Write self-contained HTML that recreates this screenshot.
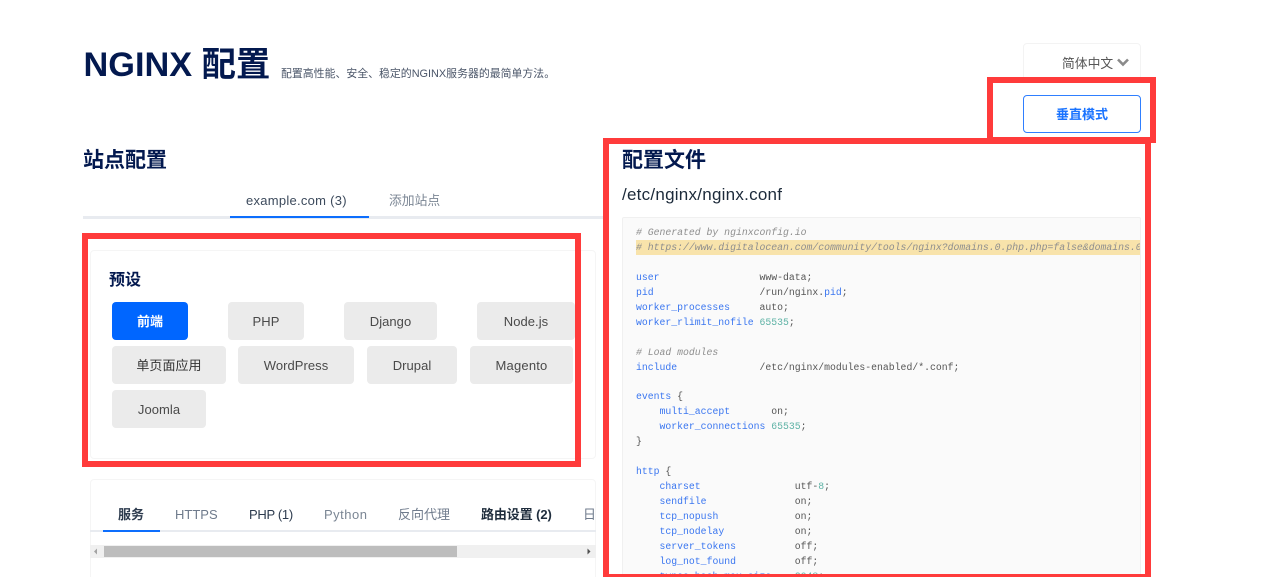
<!DOCTYPE html>
<html lang="zh-CN"><head><meta charset="utf-8"><title>NGINX 配置</title>
<style>
html,body{margin:0;padding:0;background:#fff;width:1280px;height:577px;overflow:hidden}
#w{width:1280px;height:577px;overflow:hidden;position:relative;font-family:"Liberation Sans","Noto Sans CJK SC",sans-serif;filter:blur(.3px)}
.a{position:absolute;box-sizing:border-box;white-space:nowrap}
.t{line-height:20px;height:20px;font-size:13px;color:#4b5563}
.btn{position:absolute;box-sizing:border-box;height:38px;line-height:39px;text-align:center;background:#ebebeb;border-radius:4px;font-size:13px;letter-spacing:.05px;color:#4a4a4a}
.r{position:absolute;box-sizing:border-box;border:6px solid #ff3b3b}
.nav{color:#03194f;font-weight:700}
#code{position:absolute;left:636px;top:226px;margin:0;width:504px;font:9.8px/14.95px "Liberation Mono",monospace;color:#555;overflow:hidden;height:351px;white-space:pre}
#code i{color:#8e8e8e}#code b{font-weight:400;color:#3a76f0}#code u{text-decoration:none;color:#5fb3a6}
</style></head><body><div id="w">
<div class="a nav" style="left:83.500px;top:44px;font-size:34.300px;line-height:42px">NGINX 配置</div>
<div class="a" style="left:281px;top:66px;font-size:10.9px;line-height:16px;color:#4a5568">配置高性能、安全、稳定的NGINX服务器的最简单方法。</div>

<div class="a" style="left:1023px;top:43px;width:118px;height:40px;border:1px solid #f3f3f3;border-radius:4px"></div>
<div class="a" style="left:1062px;top:53px;font-size:12.8px;line-height:21px;color:#555">简体中文</div>
<svg class="a" style="left:1116px;top:57px" width="14" height="11" viewBox="0 0 14 11"><path d="M2 2.5 7 7.5 12 2.5" fill="none" stroke="#8a8a8a" stroke-width="2.6"/></svg>
<div class="a" style="left:1023px;top:95px;width:118px;height:38px;border:1px solid #2f7fff;border-radius:4px;line-height:37px;text-align:center;font-size:13px;font-weight:700;color:#1a73ff">垂直模式</div>

<div class="a nav" style="left:83px;top:147px;font-size:21px;line-height:27px">站点配置</div>
<div class="a" style="left:83px;top:216px;width:520px;height:3px;background:#e8ebf0"></div>
<div class="a" style="left:230px;top:216px;width:139px;height:2px;background:#0d6efd"></div>
<div class="a t" style="left:246px;top:191px;color:#3c4a5c;letter-spacing:.27px">example.com (3)</div>
<div class="a t" style="left:389px;top:191px;color:#7b8694;font-size:12.8px">添加站点</div>

<div class="a" style="left:90px;top:250px;width:506px;height:209px;border:1px solid #f5f5f5;border-radius:4px"></div>
<div class="a nav" style="left:109px;top:271px;font-size:16px;line-height:20px">预设</div>
<div class="btn" style="left:112px;top:302px;width:76px;background:#0066ff;color:#fff;font-weight:700">前端</div>
<div class="btn" style="left:228px;top:302px;width:76px">PHP</div>
<div class="btn" style="left:344px;top:302px;width:93px">Django</div>
<div class="btn" style="left:477px;top:302px;width:98px">Node.js</div>
<div class="btn" style="left:112px;top:346px;width:114px;color:#333">单页面应用</div>
<div class="btn" style="left:238px;top:346px;width:116px">WordPress</div>
<div class="btn" style="left:367px;top:346px;width:90px">Drupal</div>
<div class="btn" style="left:470px;top:346px;width:103px;letter-spacing:.2px">Magento</div>
<div class="btn" style="left:112px;top:390px;width:94px">Joomla</div>

<div class="a" style="left:90px;top:479px;width:506px;height:110px;border:1px solid #f5f5f5;border-radius:4px"></div>
<div class="a" style="left:90px;top:530px;width:506px;height:2px;background:#e8ebf0"></div>
<div class="a" style="left:103px;top:530px;width:57px;height:2px;background:#0d6efd"></div>
<div class="a t" style="left:118px;top:505px;color:#2d3b4e;font-weight:700">服务</div>
<div class="a t" style="left:175px;top:505px;color:#6f7b8c">HTTPS</div>
<div class="a t" style="left:249px;top:505px;color:#2d3b4e;letter-spacing:-.3px">PHP (1)</div>
<div class="a t" style="left:324px;top:505px;color:#7b8694;letter-spacing:.5px">Python</div>
<div class="a t" style="left:398px;top:505px;color:#6f7b8c">反向代理</div>
<div class="a t" style="left:481px;top:505px;color:#1f2d3d;font-weight:700;letter-spacing:-.1px">路由设置 (2)</div>
<div class="a t" style="left:583px;top:505px;width:13px;overflow:hidden;color:#6f7b8c">日</div>
<div class="a" style="left:90px;top:545px;width:506px;height:13px;background:#f0f0f0"></div>
<div class="a" style="left:104px;top:546px;width:353px;height:11px;background:#bdbdbd"></div>
<svg class="a" style="left:93px;top:548px" width="6" height="7"><path d="M4 .5V6.500L1 3.500Z" fill="#a3a3a3"/></svg>
<svg class="a" style="left:586px;top:548px" width="6" height="7"><path d="M1.500 .5V6.500L4.500 3.500Z" fill="#505050"/></svg>

<div class="a nav" style="left:622px;top:147px;font-size:21px;line-height:27px">配置文件</div>
<div class="a" style="left:622px;top:184px;font-size:17px;line-height:22px;letter-spacing:.25px;color:#1c2a3a">/etc/nginx/nginx.conf</div>
<div class="a" style="left:622px;top:217px;width:519px;height:360px;background:#fafafa;border:1px solid #f0f0f0;border-radius:2px"></div>
<div class="a" style="left:636px;top:240px;width:504px;height:15px;background:#f8e3ab"></div>
<pre id="code"><i># Generated by nginxconfig.io
# https://www.digitalocean.com/community/tools/nginx?domains.0.php.php=false&amp;domains.0.python</i>

<b>user</b>                 www-data;
<b>pid</b>                  /run/nginx.<b>pid</b>;
<b>worker_processes</b>     auto;
<b>worker_rlimit_nofile</b> <u>65535</u>;

<i># Load modules</i>
<b>include</b>              /etc/nginx/modules-enabled/*.conf;

<b>events</b> {
    <b>multi_accept</b>       on;
    <b>worker_connections</b> <u>65535</u>;
}

<b>http</b> {
    <b>charset</b>                utf-<u>8</u>;
    <b>sendfile</b>               on;
    <b>tcp_nopush</b>             on;
    <b>tcp_nodelay</b>            on;
    <b>server_tokens</b>          off;
    <b>log_not_found</b>          off;
    <b>types_hash_max_size</b>    <u>2048</u>;</pre>

<div class="r" style="left:82px;top:233px;width:499px;height:234px"></div>
<div class="r" style="left:987px;top:77px;width:169px;height:66px"></div>
<div class="r" style="left:603px;top:138px;width:548px;height:439px;border-bottom-width:3px"></div>
</div></body></html>
